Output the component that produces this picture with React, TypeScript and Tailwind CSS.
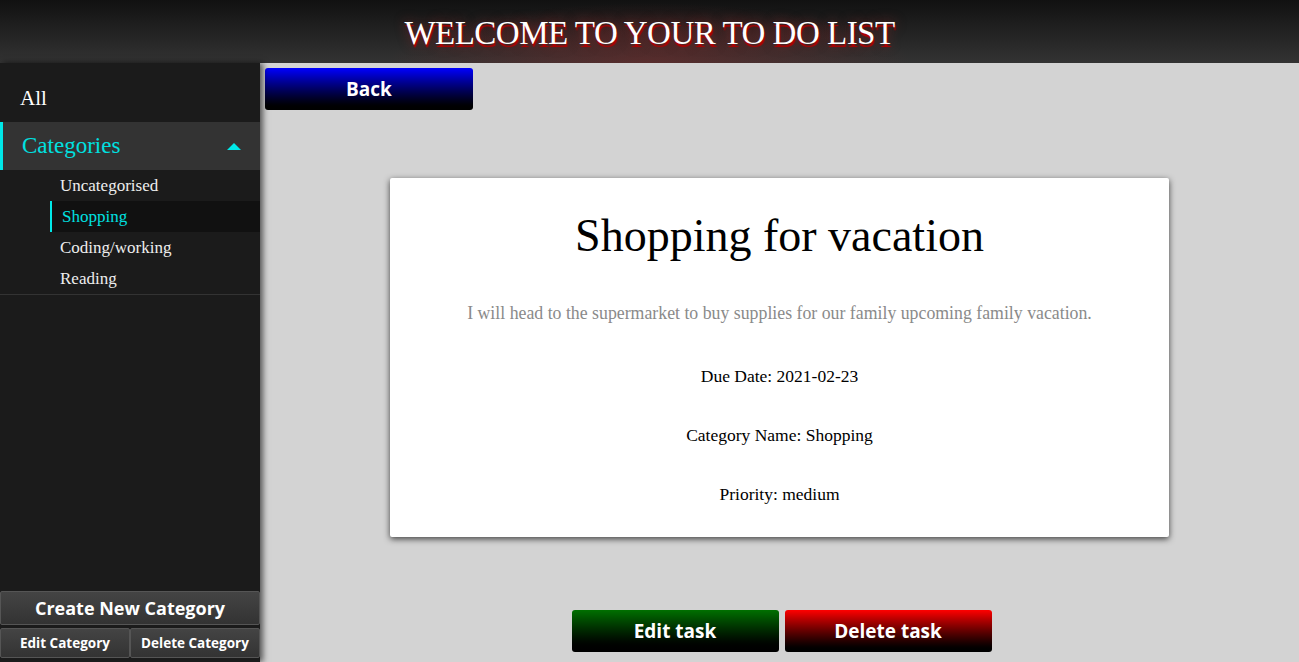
import React from "react";

const serif = { fontFamily: '"Liberation Serif", "DejaVu Serif", serif' };

export default function App() {
  return (
    <div className="h-[662px] w-full flex flex-col overflow-hidden bg-[#d3d3d3]">
      <header
        className="h-[63px] shrink-0 flex items-center justify-center"
        style={{ backgroundImage: "radial-gradient(ellipse 260px 60px at 50% 100%, rgba(120,40,40,0.55), rgba(0,0,0,0) 100%), linear-gradient(to bottom, #111111, #333333)" }}
      >
        <h1
          className="text-[33px] text-white tracking-[-0.5px] leading-none mt-[4px] font-['Liberation_Serif',serif]"
          style={{ textShadow: "1px 3px 1px #b00000, 0 0 12px rgba(200,40,40,0.5)" }}
        >
          WELCOME TO YOUR TO DO LIST
        </h1>
      </header>
      <div className="flex flex-1 min-h-0">
        <aside className="w-[260px] shrink-0 bg-[#1b1b1b] flex flex-col justify-between shadow-[3px_0_6px_rgba(0,0,0,0.6)] z-10" style={serif}>
          <div>
            <div className="h-[59px] flex items-center pl-[20px] pt-[12px] text-[21px] text-white">All</div>
            <div className="h-[48px] flex items-center justify-between bg-[#333333] border-l-[3px] border-[#00e8e8] pl-[19px] pr-[19px] text-[23px] text-[#00e0e0]">
              <span>Categories</span>
              <span className="w-0 h-0 border-l-[7px] border-r-[7px] border-b-[7px] border-l-transparent border-r-transparent border-b-[#00e8e8]" />
            </div>
            <div className="border-b border-[#333333] text-[17px]">
              <div className="h-[31px] flex items-center pl-[60px] text-[#eeeeee]">Uncategorised</div>
              <div className="h-[31px] flex items-center ml-[50px] pl-[10px] bg-[#111111] border-l-2 border-[#00e8e8] text-[#00e0e0]">Shopping</div>
              <div className="h-[31px] flex items-center pl-[60px] text-[#eeeeee]">Coding/working</div>
              <div className="h-[31px] flex items-center pl-[60px] text-[#eeeeee]">Reading</div>
            </div>
          </div>
          <div className="pb-[4px] font-['Open_Sans',sans-serif] font-bold text-white">
            <button className="w-full h-[34px] text-[18px] bg-gradient-to-b from-[#444444] to-[#333333] border border-[#555555] rounded-[2px]">
              Create New Category
            </button>
            <div className="flex mt-[3px]">
              <button className="w-1/2 h-[30px] text-[13.5px] bg-gradient-to-b from-[#444444] to-[#333333] border border-[#555555] rounded-[2px]">Edit Category</button>
              <button className="w-1/2 h-[30px] text-[13.5px] bg-gradient-to-b from-[#444444] to-[#333333] border border-[#555555] rounded-[2px]">Delete Category</button>
            </div>
          </div>
        </aside>
        <main className="flex-1 flex flex-col items-center relative">
          <div className="w-full pl-[5px] pt-[5px]">
            <button className="w-[208px] h-[42px] rounded-[3px] bg-gradient-to-b from-[#0000ff] to-[#000000] text-white text-[19px] font-bold font-['Open_Sans',sans-serif]">
              Back
            </button>
          </div>
          <div className="mt-[68px] w-[779px] h-[359px] bg-white rounded-[2px] shadow-[0_2px_6px_rgba(0,0,0,0.7)] flex flex-col items-center" style={serif}>
            <h2 className="text-[46px] text-black mt-[35px] leading-none">Shopping for vacation</h2>
            <p className="text-[17.8px] text-[#8a8a8a] mt-[41px]">I will head to the supermarket to buy supplies for our family upcoming family vacation.</p>
            <p className="text-[17.5px] text-black mt-[36px]">Due Date: 2021-02-23</p>
            <p className="text-[17.5px] text-black mt-[33px]">Category Name: Shopping</p>
            <p className="text-[17.5px] text-black mt-[33px]">Priority: medium</p>
          </div>
          <div className="mt-[73px] flex gap-[6px] ml-[4px] font-['Open_Sans',sans-serif] font-bold text-white text-[19px]">
            <button className="w-[207px] h-[42px] rounded-[3px] bg-gradient-to-b from-[#007000] to-[#000000]">Edit task</button>
            <button className="w-[207px] h-[42px] rounded-[3px] bg-gradient-to-b from-[#ff0000] to-[#000000]">Delete task</button>
          </div>
        </main>
      </div>
    </div>
  );
}
